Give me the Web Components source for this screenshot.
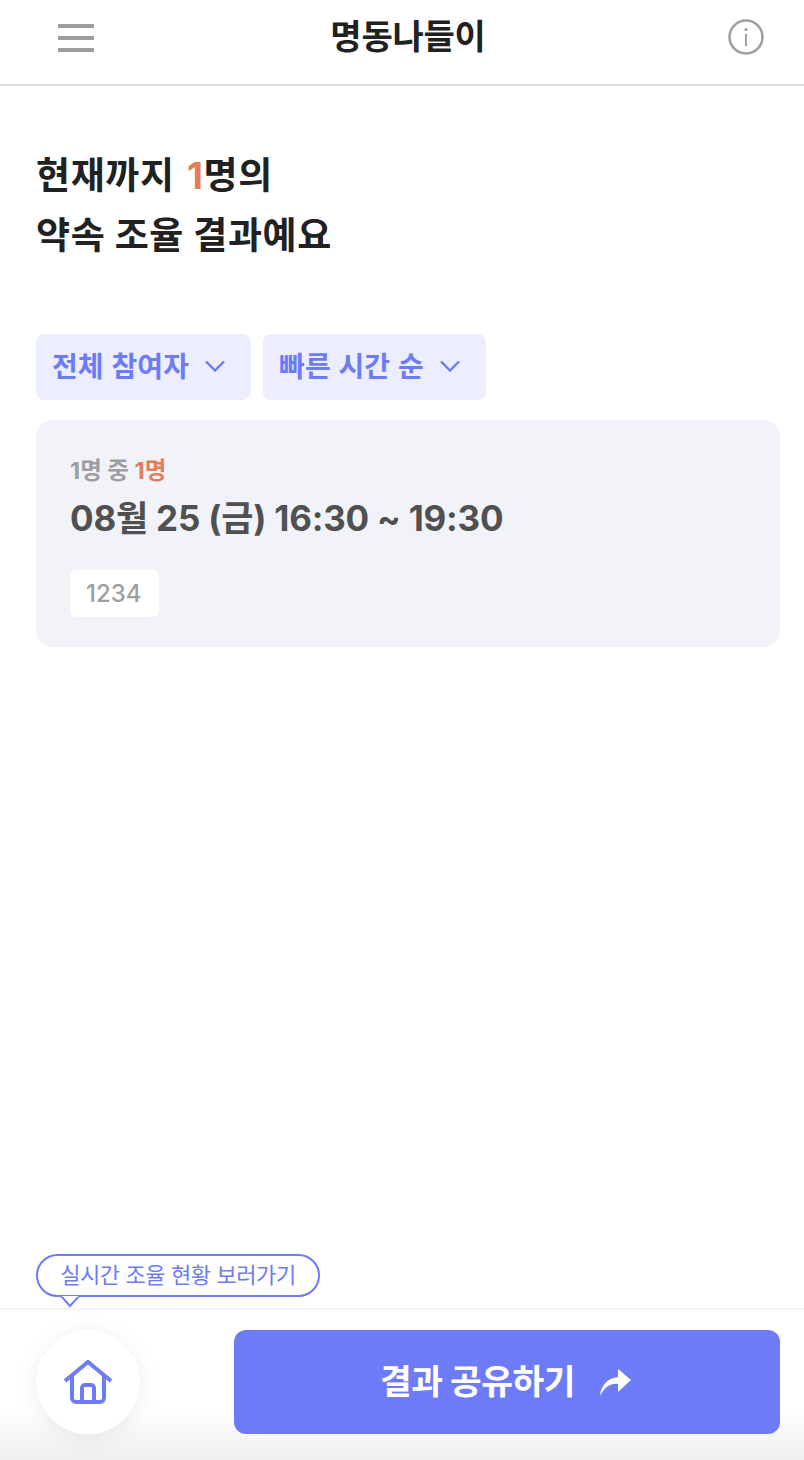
<!DOCTYPE html>
<html lang="ko"><head><meta charset="utf-8">
<style>
html,body{margin:0;padding:0;background:#fff}
body{font-family:Inter,"Noto Sans CJK KR",sans-serif;width:804px;height:1460px;overflow:hidden}
app-page{height:1460px}
result-heading b{color:#e27f58;font-weight:700;margin-left:3px}
</style></head><body>
<app-page>
  <app-header slot="header" title="명동나들이"></app-header>
  <result-heading><span>현재까지 <b>1</b>명의</span><span>약속 조율 결과예요</span></result-heading>
  <div slot="filters" style="display:contents">
    <filter-chip>전체 참여자</filter-chip>
    <filter-chip>빠른 시간 순</filter-chip>
  </div>
  <time-card slot="card" count="1명 중" hit="1명" when="08월 25 (금) 16:30 ~ 19:30" who="1234"></time-card>
  <app-footer slot="footer"></app-footer>
</app-page>
<script>
function def(name,html,init){
  customElements.define(name,class extends HTMLElement{
    constructor(){super();this.attachShadow({mode:'open'}).innerHTML=html;}
    connectedCallback(){if(init)init(this,this.shadowRoot);}
  });
}
def('app-page',`<style>
:host{display:flex;flex-direction:column;width:804px;position:relative}
.main{flex:1;display:flex;flex-direction:column;padding:0 24px 0 36px}
.filters{display:flex;gap:12px;margin-top:68px}
.card{margin-top:20px}
</style>
<slot name="header"></slot>
<div class="main"><slot></slot>
<div class="filters"><slot name="filters"></slot></div>
<div class="card"><slot name="card"></slot></div></div>
<slot name="footer"></slot>`);
def('app-header',`<style>
:host{display:flex;align-items:center;justify-content:space-between;border-bottom:2px solid #ddd;padding:0 40px 10px 58px;box-sizing:content-box;height:74px;position:relative}
.t{position:absolute;left:12px;right:0;top:14px;text-align:center;font-size:34px;font-weight:700;line-height:46px;color:#212121;letter-spacing:-.2px}
svg{display:block}
</style>
<svg width="36" height="28" viewBox="0 0 36 28" fill="#9e9e9e" style="margin-top:2px"><rect y="0" width="36" height="4"/><rect y="12" width="36" height="4"/><rect y="24" width="36" height="4"/></svg>
<div class="t"></div>
<svg width="36" height="36" viewBox="0 0 36 36" fill="none" stroke="#9e9e9e"><circle cx="18" cy="18" r="16.5" stroke-width="2.5"/><line x1="18" y1="15" x2="18" y2="27" stroke-width="2"/><circle cx="18" cy="10.5" r="1.6" fill="#9e9e9e" stroke="none"/></svg>`,
(h,s)=>{s.querySelector('.t').textContent=h.getAttribute('title');});
def('result-heading',`<style>
:host{display:flex;flex-direction:column;margin-top:60px;font-size:37px;line-height:60px;font-weight:700;color:#212121;letter-spacing:.6px}
::slotted(span){display:block}
</style><slot></slot>`);
def('filter-chip',`<style>
:host{display:flex;align-items:center;height:66px;padding:0 26px 2px 16px;gap:16px;box-sizing:border-box;background:#eceeff;border-radius:8px;color:#6e7bf7;font-size:28px;font-weight:700;letter-spacing:.1px;word-spacing:1px}
svg{display:block}
span{position:relative;top:-1px}
</style><span><slot></slot></span><svg width="20" height="12" viewBox="0 0 20 12" fill="none" stroke="#6e7bf7" stroke-width="2.4"><path d="M1 1.5 10 10.5 19 1.5"/></svg>`);
def('time-card',`<style>
:host{display:block;background:#f2f3f9;border-radius:16px;height:227px;box-sizing:border-box;padding:34px 34px 0;}
.c{font-size:23.5px;line-height:34px;font-weight:700;color:#9e9e9e}
.c b{color:#e27f58;font-weight:700}
.w{font-size:35px;line-height:58px;font-weight:700;color:#505050;margin-top:1px;white-space:nowrap;letter-spacing:-.2px}
.p{display:inline-block;margin-top:23px;background:#fff;border-radius:6px;height:47px;line-height:47px;padding:0 17px 0 16px;font-size:24px;font-weight:500;color:#9e9e9e}
</style><div class="c"><span id="a"></span> <b id="b"></b></div><div class="w" id="w"></div><div class="p" id="p"></div>`,
(h,s)=>{s.getElementById('a').textContent=h.getAttribute('count');s.getElementById('b').textContent=h.getAttribute('hit');s.getElementById('w').textContent=h.getAttribute('when');s.getElementById('p').textContent=h.getAttribute('who');});
def('app-footer',`<style>
:host{display:flex;justify-content:space-between;align-items:flex-start;height:152px;box-sizing:border-box;border-top:2px solid #f4f4f4;padding:20px 24px 0 36px;position:relative;background:linear-gradient(to bottom,#fff 0,#fff 100px,#efefef 100%)}
.tip{position:absolute;left:36px;top:-56px;height:43px;box-sizing:border-box;width:284px;border:2px solid #6e7bf7;border-radius:22px;background:#fff;color:#6e7bf7;font-size:22px;line-height:38px;text-align:center;white-space:nowrap;font-weight:400;letter-spacing:-.4px}
.tail{position:absolute;left:60px;top:-14px}
.home{width:104px;height:104px;border-radius:50%;background:#fff;box-shadow:0 4px 24px rgba(0,0,0,.08);display:flex;align-items:center;justify-content:center}
.share{width:546px;height:104px;border-radius:12px;background:#6e7bf7;color:#fff;font-size:34.5px;font-weight:700;display:flex;align-items:center;justify-content:center;gap:25px;letter-spacing:-.5px;padding-right:3px;box-sizing:border-box}
svg{display:block}
</style>
<div class="tip">실시간 조율 현황 보러가기</div>
<svg class="tail" width="20" height="12" viewBox="0 0 20 12"><path d="M1 0 10 10 19 0" fill="#fff" stroke="#6e7bf7" stroke-width="2"/><rect x="2" y="0" width="16" height="1" fill="#fff"/></svg>
<div class="home"><svg width="48" height="44" viewBox="0 0 48 44" fill="none" stroke="#6e7bf7" stroke-width="4"><path d="M1 21 24 2 47 21"/><path d="M8 16V38a4 4 0 0 0 4 4H36a4 4 0 0 0 4-4V16"/><path d="M18 42V28a3 3 0 0 1 3-3h6a3 3 0 0 1 3 3V42"/></svg></div>
<div class="share"><span style="position:relative;top:-3px">결과 공유하기</span><svg width="31" height="27" viewBox="0 0 31 27" fill="#fff"><path d="M0 27C1 16 8 9 18 8V0L31 11 18 23V15C10 14 4 19 0 27Z"/></svg></div>`);
</script>
</body></html>
